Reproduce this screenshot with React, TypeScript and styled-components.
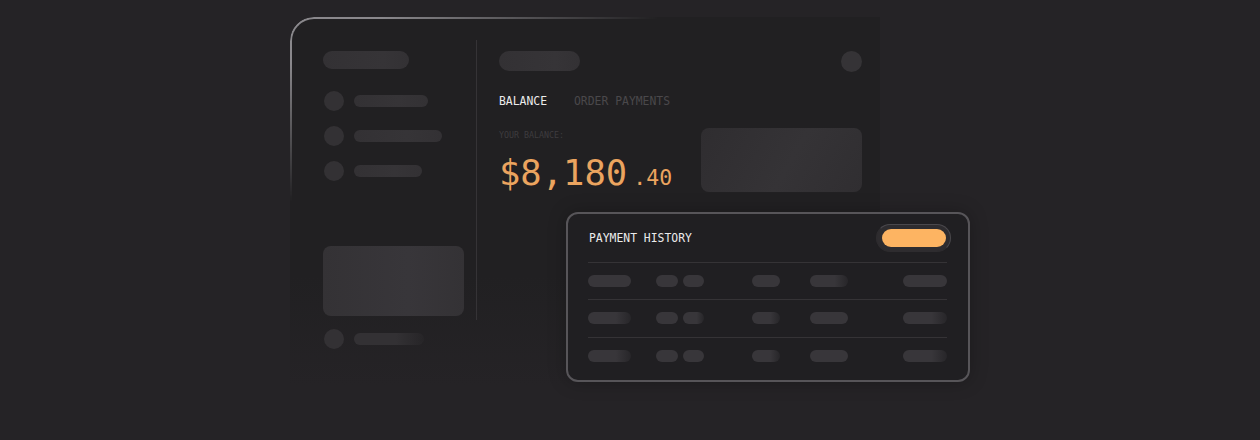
import React from 'react';
import styled, { createGlobalStyle } from 'styled-components';

const GlobalStyle = createGlobalStyle`
  html, body {
    margin: 0;
    padding: 0;
    background: #252326;
  }
  body {
    font-family: "DejaVu Sans Mono", "Liberation Mono", monospace;
  }
`;

const sideRows = [74, 88, 68];
const historyRows = [0, 1, 2];

export default function App() {
  return (
    <>
      <GlobalStyle />
      <Style.Page>
        <Style.MainCard>
          <Style.Sidebar>
            <Style.Pill $w={86} $h={18} />
            <Style.SideList>
              {sideRows.map((w, i) => (
                <Style.SideRow key={i}>
                  <Style.Dot />
                  <Style.Line $w={w} />
                </Style.SideRow>
              ))}
            </Style.SideList>
            <Style.SideBlock />
            <Style.SideRow>
              <Style.Dot />
              <Style.Line $w={70} $fade />
            </Style.SideRow>
          </Style.Sidebar>
          <Style.Divider />
          <Style.Content>
            <Style.TopRow>
              <Style.Pill $w={81} $h={20} />
              <Style.Avatar />
            </Style.TopRow>
            <Style.Tabs>
              <Style.Tab $active>BALANCE</Style.Tab>
              <Style.Tab>ORDER PAYMENTS</Style.Tab>
            </Style.Tabs>
            <Style.BalanceRow>
              <Style.BalanceInfo>
                <Style.Label>YOUR BALANCE:</Style.Label>
                <Style.Amount>
                  $8,180<Style.Cents>.40</Style.Cents>
                </Style.Amount>
              </Style.BalanceInfo>
              <Style.InfoBlock />
            </Style.BalanceRow>
          </Style.Content>
        </Style.MainCard>

        <Style.HistoryCard>
          <Style.HistoryHeader>
            <Style.HistoryTitle>PAYMENT HISTORY</Style.HistoryTitle>
            <Style.ButtonRing>
              <Style.OrangeButton />
            </Style.ButtonRing>
          </Style.HistoryHeader>
          {historyRows.map(r => (
            <Style.HistoryRow key={r}>
              <Style.Cell><Style.Bar $w={43} $fade={r > 0} /></Style.Cell>
              <Style.Cell><Style.Bar $w={22} /></Style.Cell>
              <Style.Cell><Style.Bar $w={21} $fade={r === 1} /></Style.Cell>
              <Style.Cell><Style.Bar $w={28} $fade={r > 0} /></Style.Cell>
              <Style.Cell><Style.Bar $w={38} $fade={r === 0} /></Style.Cell>
              <Style.Cell><Style.Bar $w={44} $fade={r > 0} /></Style.Cell>
            </Style.HistoryRow>
          ))}
        </Style.HistoryCard>
      </Style.Page>
    </>
  );
}

const Style = {
  Page: styled.div`
    position: relative;
    width: 1260px;
    height: 440px;
    overflow: hidden;
    padding: 17px 0 0 290px;
    box-sizing: border-box;
    background: #252326;
  `,
  MainCard: styled.div`
    position: relative;
    display: flex;
    width: 590px;
    height: 370px;
    border-radius: 24px 0 0 0;
    background: linear-gradient(180deg, #212022 0%, #212022 70%, #252326 100%);
    &::before {
      content: '';
      position: absolute;
      inset: 0;
      border-radius: 24px 0 0 0;
      border-top: 2px solid #8a888c;
      border-left: 2px solid #8a888c;
      -webkit-mask-image: radial-gradient(ellipse 370px 185px at 0 0, #000 25%, transparent 100%);
      mask-image: radial-gradient(ellipse 370px 185px at 0 0, #000 25%, transparent 100%);
      pointer-events: none;
    }
  `,
  Sidebar: styled.div`
    width: 186px;
    box-sizing: border-box;
    padding: 34px 0 0 33px;
    display: flex;
    flex-direction: column;
  `,
  Pill: styled.div<{ $w: number; $h: number }>`
    width: ${p => p.$w}px;
    height: ${p => p.$h}px;
    border-radius: ${p => p.$h / 2}px;
    background: linear-gradient(90deg, #333134 0%, #363437 70%, #333134 100%);
    flex-shrink: 0;
  `,
  SideList: styled.div`
    display: flex;
    flex-direction: column;
    gap: 15px;
    margin-top: 22px;
  `,
  SideRow: styled.div`
    display: flex;
    align-items: center;
    gap: 10px;
    height: 20px;
  `,
  Dot: styled.div`
    width: 20px;
    height: 20px;
    border-radius: 50%;
    background: #333134;
    margin-left: 1px;
  `,
  Line: styled.div<{ $w: number; $fade?: boolean }>`
    width: ${p => p.$w}px;
    height: 12px;
    border-radius: 6px;
    background: ${p =>
      p.$fade
        ? 'linear-gradient(90deg, #333134 60%, rgba(51,49,52,0.2) 100%)'
        : 'linear-gradient(90deg, #333134 0%, #363437 60%, #333134 100%)'};
  `,
  SideBlock: styled.div`
    width: 141px;
    height: 70px;
    margin: 65px 0 13px;
    border-radius: 8px;
    background: linear-gradient(90deg, #343235 0%, #38363a 60%, #343235 100%);
  `,
  Divider: styled.div`
    width: 1px;
    height: 280px;
    margin-top: 23px;
    background: #353336;
    flex-shrink: 0;
  `,
  Content: styled.div`
    flex: 1;
    padding: 34px 18px 0 22px;
    display: flex;
    flex-direction: column;
  `,
  TopRow: styled.div`
    display: flex;
    align-items: flex-start;
    justify-content: space-between;
    height: 21px;
  `,
  Avatar: styled.div`
    width: 21px;
    height: 21px;
    border-radius: 50%;
    background: #353336;
  `,
  Tabs: styled.div`
    display: flex;
    gap: 27px;
    margin-top: 22px;
  `,
  Tab: styled.span<{ $active?: boolean }>`
    font-size: 11.4px;
    line-height: 14px;
    color: ${p => (p.$active ? '#ececec' : '#4a484b')};
  `,
  BalanceRow: styled.div`
    display: flex;
    justify-content: space-between;
    align-items: flex-start;
    margin-top: 20px;
  `,
  BalanceInfo: styled.div`
    display: flex;
    flex-direction: column;
    padding-top: 2px;
  `,
  Label: styled.span`
    font-size: 8.3px;
    line-height: 10px;
    color: #3e3c3f;
  `,
  Amount: styled.div`
    margin-top: 13px;
    font-size: 35.5px;
    line-height: 40px;
    color: #eba45f;
    white-space: nowrap;
  `,
  Cents: styled.span`
    font-size: 21.5px;
    margin-left: 6px;
  `,
  InfoBlock: styled.div`
    width: 161px;
    height: 64px;
    border-radius: 8px;
    background: linear-gradient(120deg, #2f2d30 0%, #353336 55%, #302e31 100%);
  `,
  HistoryCard: styled.div`
    position: absolute;
    left: 566px;
    top: 212px;
    width: 404px;
    height: 170px;
    box-sizing: border-box;
    border: 2px solid #575559;
    border-radius: 12px;
    background: #201f22;
    box-shadow: 0 0 18px rgba(0, 0, 0, 0.25);
    padding: 0 21px 6px 20px;
    display: flex;
    flex-direction: column;
  `,
  HistoryHeader: styled.div`
    display: flex;
    align-items: center;
    justify-content: space-between;
    padding: 10px 0 10px 1px;
    margin-right: -4px;
  `,
  HistoryTitle: styled.span`
    font-size: 11.4px;
    line-height: 14px;
    color: #ebebeb;
  `,
  ButtonRing: styled.div`
    display: flex;
    align-items: center;
    justify-content: center;
    width: 75px;
    height: 28px;
    box-sizing: border-box;
    border-radius: 14px;
    background: #2e2c2f;
    border: 1px solid #2e2c2f;
    border-top-color: #4a484c;
    border-right-color: #4a484c;
  `,
  OrangeButton: styled.div`
    width: 64px;
    height: 18px;
    border-radius: 9px;
    background: #fdb462;
  `,
  HistoryRow: styled.div`
    display: grid;
    grid-template-columns: 68px 27px 69px 58px 93px 44px;
    align-items: center;
    height: 37px;
    border-top: 1px solid #353336;
  `,
  Cell: styled.div`
    display: flex;
  `,
  Bar: styled.div<{ $w: number; $fade?: boolean }>`
    width: ${p => p.$w}px;
    height: 12px;
    border-radius: 6px;
    background: ${p =>
      p.$fade
        ? 'linear-gradient(90deg, #38363a 65%, rgba(56,54,58,0.3) 100%)'
        : '#38363a'};
  `,
};
